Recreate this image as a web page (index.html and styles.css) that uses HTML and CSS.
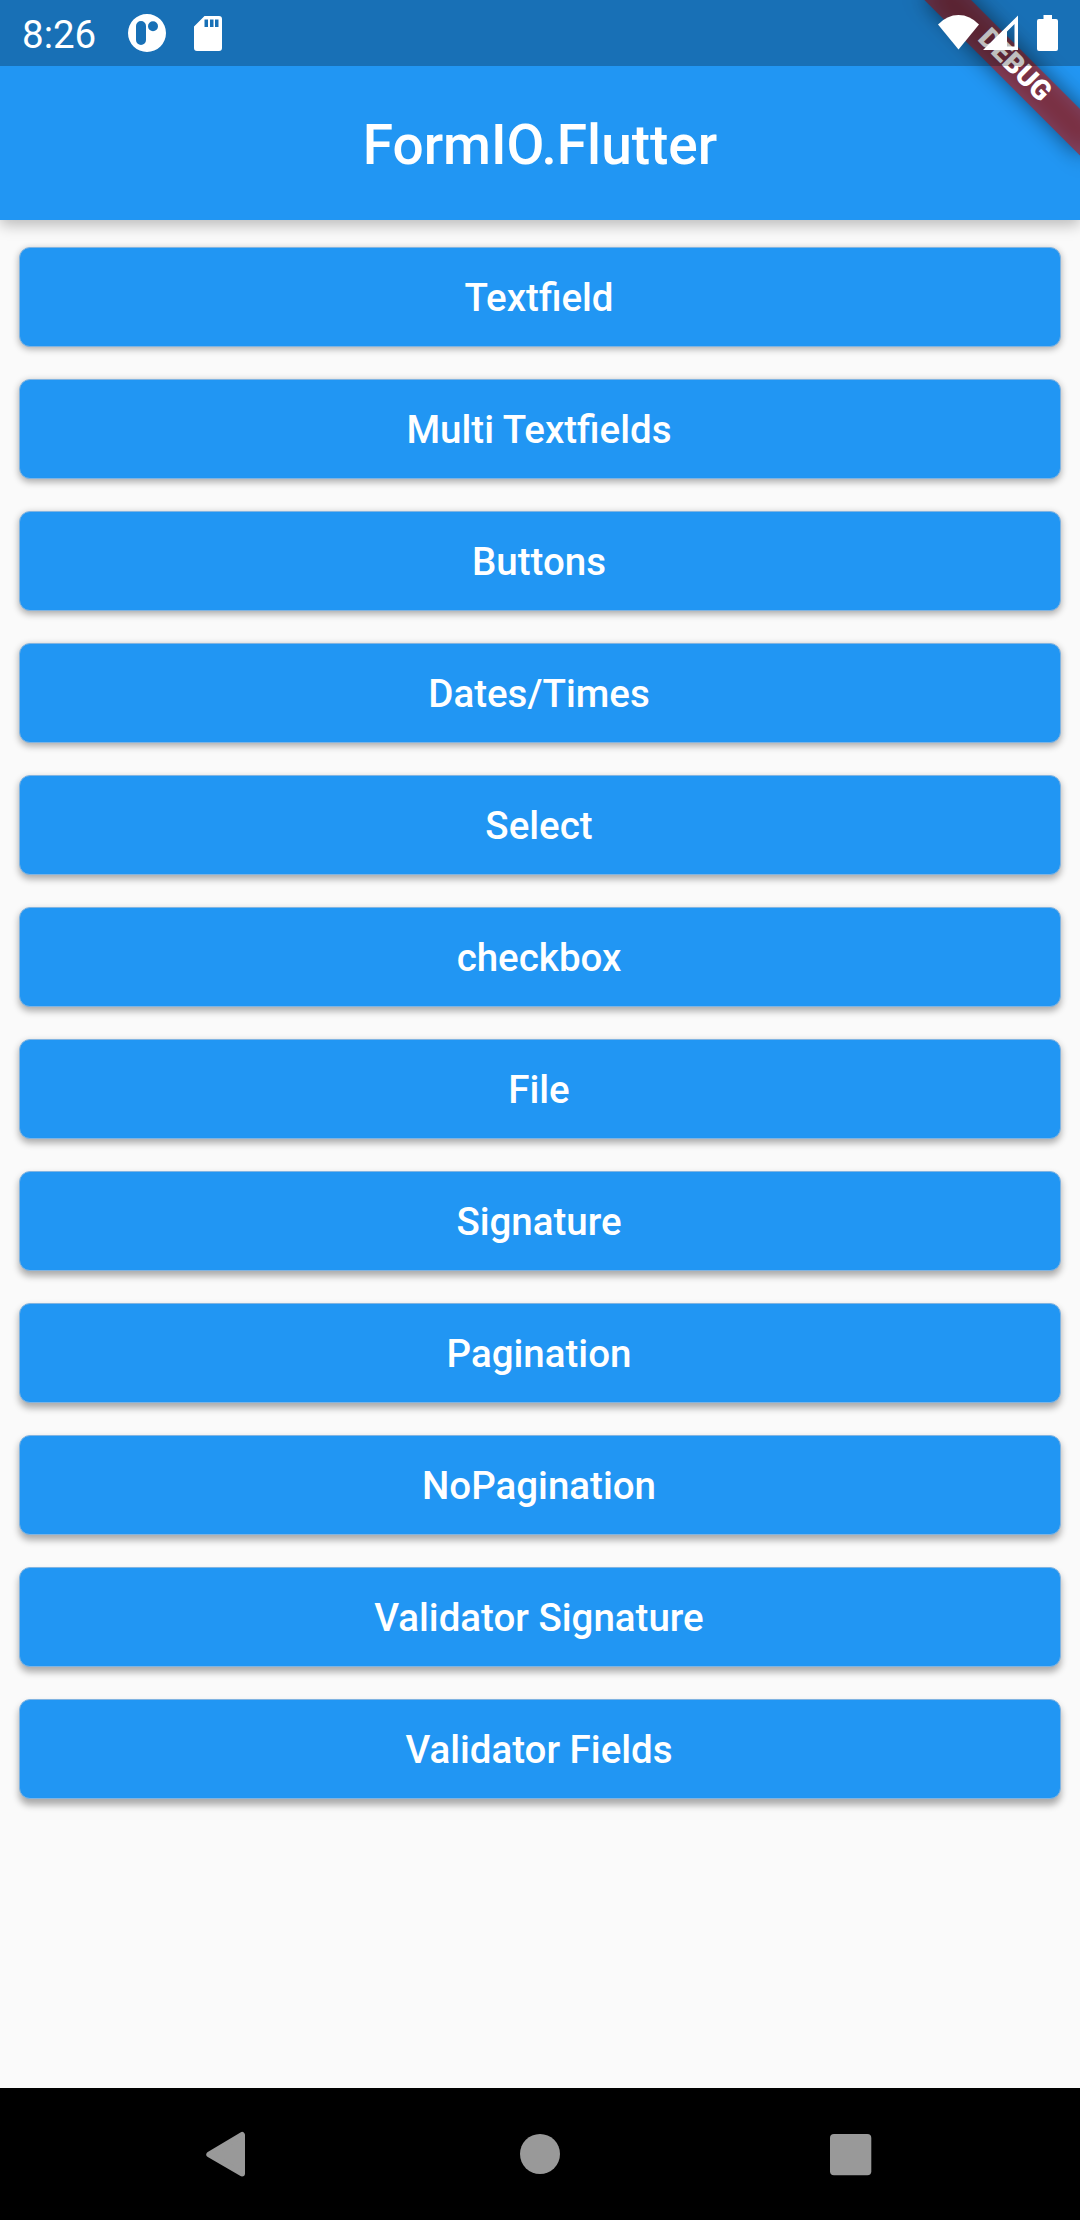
FILE: index.html
```html
<!DOCTYPE html>
<html lang="en">
<head>
<meta charset="utf-8">
<title>FormIO.Flutter</title>
<link rel="stylesheet" href="styles.css">
</head>
<body>
<div class="screen">
  <div class="debug-banner">
    <div class="debug-shadow"></div>
    <div class="debug-ribbon">DEBUG</div>
  </div>
  <div class="status-bar">
    <span class="clock">8:26</span>
    <svg class="notif" width="38" height="38" viewBox="0 0 38 38"><path fill="#fff" fill-rule="evenodd" d="M19 0a19 19 0 1 1 0 38a19 19 0 1 1 0-38zM13 7a5 5 0 0 0-5 5v14a5 5 0 0 0 10 0V12a5 5 0 0 0-5-5zM25 7.200a5 5 0 1 0 0 10a5 5 0 1 0 0-10z"/></svg>
    <svg class="sdcard" width="28" height="35" viewBox="0 0 28 35"><path fill="#fff" fill-rule="evenodd" d="M10.500 0H25a3 3 0 0 1 3 3v29a3 3 0 0 1-3 3H3a3 3 0 0 1-3-3V10.500zM10.500 3.500v7.500h3.500V3.500zM16 3.500v7.500h3.500V3.500zM21 3.500v7.500h3.500V3.500z"/></svg>
    <div class="system">
      <svg class="wifi" width="42" height="36" viewBox="0 0 42 36"><path fill="#fff" d="M20.500 34.500L0 9.500Q9 0 20.500 0T41 9.500z"/></svg>
      <svg class="signal" width="36" height="36" viewBox="0 0 36 36"><path fill="#fff" fill-rule="evenodd" d="M35 .500V35H0zM31.500 9L24 16.500V31.500h7.500z"/></svg>
      <svg class="battery" width="22" height="36" viewBox="0 0 22 36"><path fill="#fff" d="M6.500 0h8.500v4h4a2 2 0 0 1 2 2v28a2 2 0 0 1-2 2H2a2 2 0 0 1-2-2V6a2 2 0 0 1 2-2h4.500z"/></svg>
    </div>
  </div>
  <header class="app-bar"><h1>FormIO.Flutter</h1></header>
  <main class="list">
    <button style="--i:0">Textfield</button>
    <button style="--i:1">Multi Textfields</button>
    <button style="--i:2">Buttons</button>
    <button style="--i:3">Dates/Times</button>
    <button style="--i:4">Select</button>
    <button style="--i:5">checkbox</button>
    <button style="--i:6">File</button>
    <button style="--i:7">Signature</button>
    <button style="--i:8">Pagination</button>
    <button style="--i:9">NoPagination</button>
    <button style="--i:10">Validator Signature</button>
    <button style="--i:11">Validator Fields</button>
  </main>
  <nav class="nav-bar">
    <svg width="46" height="46" viewBox="0 0 46 46"><path fill="#999" stroke="#999" stroke-width="6" stroke-linejoin="round" d="M3.300 23.500L36 4V42.500z"/></svg>
    <svg width="46" height="46" viewBox="0 0 46 46"><circle cx="23" cy="23" r="20" fill="#999"/></svg>
    <svg width="46" height="46" viewBox="0 0 46 46"><rect x="2" y="3" width="41.300" height="41.300" rx="4" fill="#999"/></svg>
  </nav>
</div>
</body>
</html>
```
FILE: styles.css
```css
* { box-sizing: border-box; }

body {
  margin: 0;
  background: #fafafa;
  font-family: Roboto, sans-serif;
  color: #fff;
}

.screen {
  position: relative;
  width: 1080px;
  height: 2220px;
  display: flex;
  flex-direction: column;
  overflow: hidden;
}

.status-bar {
  position: relative;
  z-index: 3;
  flex: none;
  height: 66px;
  padding: 0 21px 0 22px;
  display: flex;
  align-items: flex-start;
  background: rgba(0, 0, 0, .25);
}

.clock {
  width: 76px;
  font-size: 38.500px;
  line-height: 46px;
  padding-top: 12px;
  white-space: nowrap;
}

.notif { margin: 14px 0 0 29.500px; }
.sdcard { margin: 16px 0 0 28px; }

.system {
  margin-left: auto;
  padding-top: 15px;
  display: flex;
}

.signal { margin: 0 18px 0 3px; }

.app-bar {
  position: relative;
  z-index: 1;
  flex: none;
  height: 220px;
  margin-top: -66px;
  padding-top: 70px;
  display: flex;
  align-items: center;
  justify-content: center;
  background: #2196f3;
  box-shadow: 0 5px 14px rgba(0, 0, 0, .26);
}

h1 {
  margin: 0;
  font-size: 55px;
  font-weight: 500;
  line-height: 64px;
}

.list {
  flex: 1;
  padding: 27px 19px 0;
  display: flex;
  flex-direction: column;
  gap: 32px;
}

.list button {
  flex: none;
  height: 100px;
  border: 1px solid #80b4e2;
  border-radius: 11px;
  padding: 0 2px 0 0;
  background: #2196f3;
  color: #fff;
  font: 500 38.500px/45px Roboto, sans-serif;
  box-shadow: 0 calc(2px + var(--i) * .3px) 7px rgba(0, 0, 0, .32);
}

.nav-bar {
  flex: none;
  height: 132px;
  padding: 0 206px;
  display: flex;
  align-items: center;
  justify-content: space-between;
  background: #000;
}

.debug-banner {
  position: absolute;
  z-index: 2;
  top: 0;
  left: 1080px;
  width: 0;
  height: 0;
  transform: rotate(45deg);
}

.debug-shadow,
.debug-ribbon {
  position: absolute;
  left: -110px;
  top: 77px;
  width: 220px;
  height: 33px;
}

.debug-shadow {
  background: rgba(0, 0, 0, .5);
  filter: blur(10.900px);
}

.debug-ribbon {
  background: rgba(183, 28, 28, .627);
  font-size: 28.050px;
  font-weight: 900;
  line-height: 30px;
  text-align: center;
}
```
